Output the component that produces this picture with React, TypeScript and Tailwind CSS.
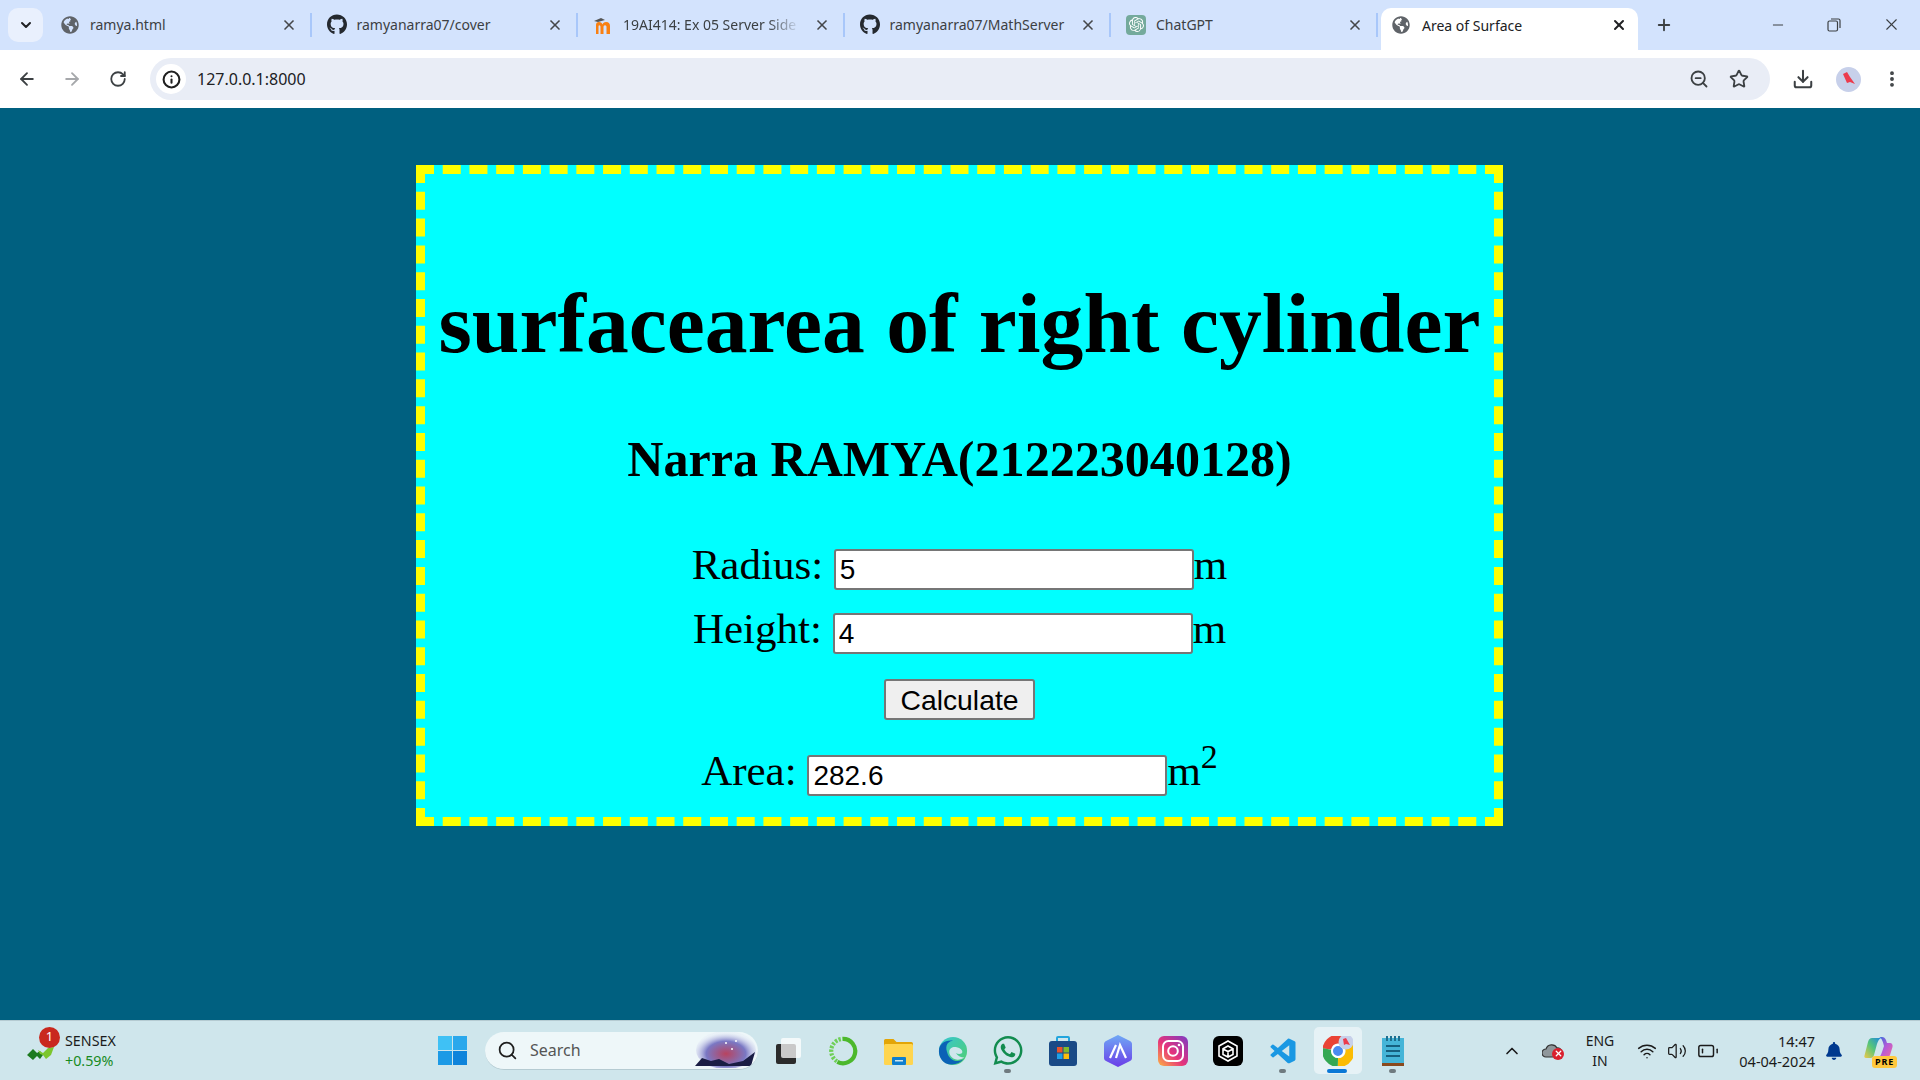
import { ArrowLeft, ArrowRight, BatteryLow, ChevronDown, ChevronUp, Download, EllipsisVertical, Info, Minus, Plus, RotateCw, Search, Star, Volume2, Wifi, X, ZoomOut } from "lucide-react";
import { FaGithub, FaGlobeAmericas, FaWhatsapp, FaBell } from "react-icons/fa";
import { SiOpenai } from "react-icons/si";
import { BiLogoVisualStudio } from "react-icons/bi";
import type { ReactNode } from "react";

const ui = "font-['Noto_Sans',sans-serif]";

function Moodle() {
  return (
    <svg width="20" height="20" viewBox="0 0 20 20">
      <path d="M3 19V10c0-2 1-3 3-3s3 1 3.500 2.500C10 8 11 7 13 7c3 0 4 2 4 4v8h-3.500v-7c0-1-.5-1.700-1.500-1.700s-1.500.7-1.500 1.700v7H7.500v-7c0-1-.5-1.700-1.200-1.700S5.500 11 5.500 12v7z" fill="#f98012" />
      <path d="M1 6l7-3 4 2-7 2z" fill="#555" />
    </svg>
  );
}

function Tab({ icon, title, fade }: { icon: ReactNode; title: string; fade?: boolean }) {
  return (
    <div className="flex h-[50px] w-[266.500px] shrink-0 items-center pl-[15px] pb-[1px]">
      <span className="flex w-[20px] shrink-0 justify-center">{icon}</span>
      <span className={`ml-[10px] flex-1 overflow-hidden whitespace-nowrap text-[14px] text-[#3c4043] ${fade ? "[mask-image:linear-gradient(90deg,#000_80%,transparent_98%)]" : ""}`}>
        {title}
      </span>
      <X size={16} strokeWidth={2.5} className="ml-[10px] shrink-0 text-[#45474a]" />
      <span className="ml-[13px] h-[24px] w-[2px] shrink-0 bg-[#a8c7fa]" />
    </div>
  );
}

function ChatGptIcon() {
  return (
    <span className="flex h-[20px] w-[20px] items-center justify-center rounded-[4px] bg-[#74aa9c]">
      <SiOpenai size={15} className="text-white" />
    </span>
  );
}

function ChromeBar() {
  return (
    <>
      <div className={`flex h-[50px] items-start bg-[#d3e3fd] ${ui}`}>
        <div className="mt-[8px] ml-[8px] mr-[2px] flex h-[34px] w-[35px] items-center justify-center rounded-[10px] bg-[#e9f0fd]">
          <ChevronDown size={16} strokeWidth={3} className="text-[#202124]" />
        </div>
        <Tab icon={<FaGlobeAmericas size={18} className="text-[#5f6368]" />} title="ramya.html" />
        <Tab icon={<FaGithub size={21} className="text-[#24292f]" />} title="ramyanarra07/cover" />
        <Tab icon={<Moodle />} title="19AI414: Ex 05 Server Side Processing" fade />
        <Tab icon={<FaGithub size={21} className="text-[#24292f]" />} title="ramyanarra07/MathServer" />
        <Tab icon={<ChatGptIcon />} title="ChatGPT" />
        <div className="relative mt-[8px] ml-[3.500px] flex h-[42px] w-[257px] shrink-0 items-center rounded-t-[10px] bg-white pr-[11px] pb-[8px] pl-[11px]">
          <FaGlobeAmericas size={18} className="text-[#5f6368]" />
          <span className="ml-[12px] flex-1 text-[14px] text-[#202124]">Area of Surface</span>
          <X size={16} strokeWidth={3} className="text-[#202124]" />
        </div>
        <div className="mt-[16px] ml-[15px] flex w-[22px] justify-center">
          <Plus size={18} strokeWidth={2.5} className="text-[#3c4043]" />
        </div>
        <div className="mt-[15px] ml-[95px] flex items-center text-[#3c4043]">
          <Minus size={16} strokeWidth={1.5} />
          <svg className="ml-[41px]" width="14" height="14" viewBox="0 0 14 14" fill="none" stroke="#3c4043" strokeWidth="1.200">
            <rect x="1" y="3" width="9.500" height="10" rx="1.500" />
            <path d="M4 1h7.500a1.500 1.500 0 0 1 1.500 1.500V10" />
          </svg>
          <X size={19} strokeWidth={1.4} className="ml-[41px]" />
        </div>
      </div>
      <div className={`flex h-[58px] items-center rounded-t-[10px] bg-white ${ui}`}>
        <ArrowLeft size={20} strokeWidth={2.2} className="ml-[17px] text-[#3c4043]" />
        <ArrowRight size={20} strokeWidth={2.2} className="ml-[25px] text-[#a6a8ab]" />
        <RotateCw size={18} strokeWidth={2.4} className="ml-[27px] text-[#3c4043]" />
        <div className="ml-[23px] flex h-[42px] w-[1620px] shrink-0 items-center rounded-full bg-[#e9edf6] pr-[21px] pl-[6px]">
          <span className="flex h-[30px] w-[30px] items-center justify-center rounded-full bg-white">
            <Info size={19} strokeWidth={2.6} className="text-[#1f1f1f]" />
          </span>
          <span className="ml-[11px] flex-1 text-[16px] text-[#202124]">127.0.0.1:8000</span>
          <ZoomOut size={20} strokeWidth={2.2} className="text-[#3c4043]" />
          <Star size={20} strokeWidth={2.2} className="ml-[20px] text-[#3c4043]" />
        </div>
        <Download size={22} strokeWidth={2.2} className="ml-[22px] text-[#3c4043]" />
        <span className="ml-[22px] flex h-[25px] w-[25px] items-center justify-center rounded-full bg-[#c7d0ea]">
          <svg width="14" height="16" viewBox="0 0 14 16"><path d="M1 3l4-2 3 5 5 7-5-2-3 1z" fill="#ec3b4d" /></svg>
        </span>
        <EllipsisVertical size={20} strokeWidth={2.6} className="ml-[21px] text-[#3c4043]" />
      </div>
    </>
  );
}

function TaskIcon({ children, dot, active }: { children: ReactNode; dot?: boolean; active?: boolean }) {
  return (
    <div className="relative flex h-[47px] w-[55px] shrink-0 items-center justify-center">
      {active ? <span className="absolute inset-y-0 left-[4px] right-[3px] rounded-[5px] bg-[#e6f2f6]" /> : null}
      <span className="relative flex h-[30px] w-[30px] items-center justify-center">{children}</span>
      {dot ? <span className="absolute bottom-[1px] left-[24px] h-[4px] w-[7px] rounded-full bg-[#6f7b80]" /> : null}
      {active ? <span className="absolute bottom-[1px] left-[17px] h-[4px] w-[20px] rounded-full bg-[#0a78d6]" /> : null}
    </div>
  );
}

function Taskbar() {
  return (
    <div className={`flex h-[60px] items-center border-t border-[#b5cbd2] bg-[#cfe6ec] ${ui}`}>
      <div className="relative ml-[26px] flex w-[399px] shrink-0 items-center">
        <svg width="30" height="20" viewBox="0 0 30 20" className="mt-[2px]">
          <path d="M1 13l6-6 4 4 3-2 3 4-3 4-3-3-4 4z" fill="#1c7a1f" />
          <path d="M12 8l5 3 5-5 6-1-3 8-5 4-3-4-3-1z" fill="#7cc62d" />
        </svg>
        <span className="absolute left-[13px] top-[-4px] flex h-[21px] w-[21px] items-center justify-center rounded-full bg-[#c9281e] text-[13px] text-white">1</span>
        <div className="ml-[9px] text-[14.300px] leading-[20px]">
          <div className="text-[#1b1b1b]">SENSEX</div>
          <div className="text-[#178a1e]">+0.59%</div>
        </div>
      </div>
      <div className="grid h-[47px] w-[55px] shrink-0 place-items-center">
        <div className="grid grid-cols-2 gap-[1px]">
          <span className="h-[14px] w-[14px] bg-[#3fc1f5]" />
          <span className="h-[14px] w-[14px] bg-[#2aa8ec]" />
          <span className="h-[14px] w-[14px] bg-[#1c9ae6]" />
          <span className="h-[14px] w-[14px] bg-[#0f84db]" />
        </div>
      </div>
      <div className="mr-[2px] ml-[5px] flex h-[38px] w-[273px] shrink-0 items-center overflow-hidden rounded-full border-b border-[#b5cbd2] bg-[#eef7f9] pl-[12px]">
        <Search size={21} strokeWidth={2} className="text-[#1f1f1f]" />
        <span className="ml-[12px] flex-1 text-[16px] text-[#555]">Search</span>
        <svg width="66" height="36" viewBox="0 0 66 36">
          <defs>
            <radialGradient id="neb" cx="50%" cy="60%" r="55%">
              <stop offset="0%" stopColor="#b8435f" />
              <stop offset="60%" stopColor="#7a78c4" />
              <stop offset="100%" stopColor="#d9dcf2" stopOpacity="0.2" />
            </radialGradient>
          </defs>
          <ellipse cx="34" cy="18" rx="30" ry="19" fill="url(#neb)" />
          <path d="M3 34l7-8 9 3 8-2 10 5 14-3 12-9-4 14z" fill="#1a1d44" />
          <circle cx="34" cy="11" r="1" fill="#fff" /><circle cx="40" cy="17" r="1" fill="#fff" /><circle cx="44" cy="9" r="1" fill="#fff" />
        </svg>
      </div>
      <TaskIcon>
        <span className="absolute bottom-[2px] left-[3px] h-[20px] w-[20px] rounded-[2px] bg-[#2b2b2b]" />
        <span className="absolute top-[2px] right-[2px] h-[20px] w-[20px] rounded-[2px] bg-white/75" />
      </TaskIcon>
      <TaskIcon>
        <svg width="32" height="32" viewBox="0 0 32 32" fill="none">
          <path d="M16 3a13 13 0 1 1-6 24.500" stroke="#4cb82c" strokeWidth="4.500" />
          <path d="M9.500 27A13 13 0 0 1 16 3" stroke="#6fcf57" strokeWidth="4.500" strokeDasharray="2.500 1.500" />
        </svg>
      </TaskIcon>
      <TaskIcon>
        <svg width="30" height="30" viewBox="0 0 30 30">
          <path d="M1 4.500a1.500 1.500 0 0 1 1.500-1.500h8l3 3h14A2 2 0 0 1 30 8v4H1z" fill="#e3a507" />
          <rect x="1" y="8" width="29" height="21" rx="1.500" fill="#ffd54f" />
          <rect x="9" y="21" width="14" height="8" rx="1" fill="#0f7fcf" />
          <rect x="12" y="24" width="8" height="1.500" fill="#cfe6ec" />
        </svg>
      </TaskIcon>
      <TaskIcon>
        <svg width="32" height="32" viewBox="0 0 32 32">
          <defs>
            <linearGradient id="edge" x1="0" y1="0" x2="1" y2="1">
              <stop offset="0%" stopColor="#36c6d3" />
              <stop offset="100%" stopColor="#52cf6e" />
            </linearGradient>
          </defs>
          <circle cx="16" cy="16" r="15" fill="url(#edge)" />
          <path d="M1 16C1 8 8 4 16 5c-8 1-8 8-6 13 2 7 10 12 18 6-5 6-13 8-20 5C3 26 1 21 1 16z" fill="#0b62b6" />
          <path d="M12 17c0-4 4-6 8-5 4 1 6 3 6 5s-4 3-7 1c2 3 6 5 9 5-4 3-10 3-13 0-2-2-3-4-3-6z" fill="#cfe6ec" />
        </svg>
      </TaskIcon>
      <TaskIcon dot>
        <FaWhatsapp size={33} className="text-[#128c4f]" />
      </TaskIcon>
      <TaskIcon>
        <svg width="30" height="32" viewBox="0 0 30 32">
          <path d="M9 7V3a1 1 0 0 1 1-1h10a1 1 0 0 1 1 1v4" fill="none" stroke="#22a5dd" strokeWidth="2" />
          <rect x="1" y="6" width="28" height="25" rx="3" fill="#1a4a86" />
          <rect x="9" y="12" width="5.500" height="5.500" fill="#e8532b" />
          <rect x="15.500" y="12" width="5.500" height="5.500" fill="#7fba2c" />
          <rect x="9" y="18.500" width="5.500" height="5.500" fill="#1da1e8" />
          <rect x="15.500" y="18.500" width="5.500" height="5.500" fill="#fbbd0c" />
        </svg>
      </TaskIcon>
      <TaskIcon>
        <svg width="30" height="34" viewBox="0 0 30 34">
          <defs>
            <linearGradient id="hex" x1="0" y1="0" x2="0" y2="1">
              <stop offset="0%" stopColor="#6fa8f5" />
              <stop offset="100%" stopColor="#6a3de8" />
            </linearGradient>
          </defs>
          <path d="M15 1l12 6c1 .5 2 1.500 2 3v14c0 1.500-1 2.500-2 3l-12 6-12-6c-1-.5-2-1.500-2-3V10c0-1.500 1-2.500 2-3z" fill="url(#hex)" />
          <path d="M7 24l6-13M13 24l4-13 6 13" fill="none" stroke="#fff" strokeWidth="2.200" />
        </svg>
      </TaskIcon>
      <TaskIcon>
        <svg width="30" height="30" viewBox="0 0 30 30">
          <defs>
            <linearGradient id="insta" x1="0" y1="1" x2="1" y2="0">
              <stop offset="0%" stopColor="#fdb244" />
              <stop offset="45%" stopColor="#e5337b" />
              <stop offset="100%" stopColor="#7d3bc4" />
            </linearGradient>
          </defs>
          <rect width="30" height="30" rx="6" fill="url(#insta)" />
          <rect x="5" y="5" width="20" height="20" rx="5.500" fill="none" stroke="#fff" strokeWidth="2" />
          <circle cx="15" cy="15" r="4.800" fill="none" stroke="#fff" strokeWidth="2" />
          <circle cx="21" cy="9" r="1.300" fill="#fff" />
        </svg>
      </TaskIcon>
      <TaskIcon>
        <svg width="30" height="30" viewBox="0 0 30 30">
          <rect width="30" height="30" rx="6" fill="#000" />
          <path d="M15 5l9 5v10l-9 5-9-5V10z M15 10l5 2.800v5.600L15 21l-5-2.600v-5.600z M10 13l5 2.500 5-2.500M15 15.500V21" fill="none" stroke="#fff" strokeWidth="1.600" />
        </svg>
      </TaskIcon>
      <TaskIcon dot>
        <BiLogoVisualStudio size={36} className="text-[#1a98e3]" />
      </TaskIcon>
      <TaskIcon active>
        <svg width="30" height="30" viewBox="0 0 30 30" fill="none" strokeWidth="9">
          <path d="M3.900 13a11.500 11.500 0 0 1 22-3" stroke="#ea4335" />
          <path d="M25.900 10a11.500 11.500 0 0 1-11 16.500" stroke="#fbbc04" />
          <path d="M14.900 26.500A11.500 11.500 0 0 1 3.900 13" stroke="#34a853" />
          <circle cx="15" cy="15" r="6" fill="#4a8bf0" stroke="#fff" strokeWidth="2" />
          <circle cx="23" cy="6" r="7.500" fill="#c7d0ea" stroke="none" />
          <path d="M20 3l3-1 4 7-4-1-2 1z" fill="#ec3b4d" stroke="none" />
        </svg>
      </TaskIcon>
      <TaskIcon dot>
        <svg width="24" height="32" viewBox="0 0 24 32">
          <rect x="1" y="3" width="22" height="26" fill="#45b5d8" />
          <rect x="1" y="28" width="22" height="3" fill="#8a4a1e" />
          <rect x="5" y="1" width="2" height="5" fill="#1d6f8f" /><rect x="9" y="1" width="2" height="5" fill="#1d6f8f" /><rect x="13" y="1" width="2" height="5" fill="#1d6f8f" /><rect x="17" y="1" width="2" height="5" fill="#1d6f8f" />
          <rect x="5" y="10" width="14" height="2" fill="#16607f" /><rect x="5" y="15" width="14" height="2" fill="#16607f" /><rect x="5" y="20" width="14" height="2" fill="#16607f" />
        </svg>
      </TaskIcon>
      <ChevronUp size={20} strokeWidth={2} className="ml-[82px] shrink-0 text-[#1b1b1b]" />
      <div className="relative ml-[20px] h-[20px] w-[20px] shrink-0">
        <svg width="20" height="16" viewBox="0 0 20 16" className="mt-[1px]"><path d="M4 15a4 4 0 0 1 0-8 6 6 0 0 1 11-1 4 4 0 0 1 1 9z" fill="#8f979b" stroke="#333" strokeWidth="1.200" /></svg>
        <span className="absolute left-[10px] top-[7px] flex h-[12px] w-[12px] items-center justify-center rounded-full bg-[#d9202e]">
          <X size={9} strokeWidth={3.5} className="text-white" />
        </span>
      </div>
      <div className="ml-[20px] w-[36px] shrink-0 text-center text-[14px] leading-[20px] text-[#1b1b1b]">
        <div>ENG</div>
        <div>IN</div>
      </div>
      <Wifi size={20} strokeWidth={1.8} className="ml-[19px] shrink-0 text-[#1b1b1b]" />
      <Volume2 size={20} strokeWidth={1.5} className="ml-[10px] shrink-0 text-[#1b1b1b]" />
      <BatteryLow size={22} strokeWidth={1.6} className="ml-[10px] shrink-0 text-[#1b1b1b]" />
      <div className="ml-[16px] w-[80px] shrink-0 text-right text-[14.500px] leading-[20px] whitespace-nowrap text-[#1b1b1b]">
        <div>14:47</div>
        <div>04-04-2024</div>
      </div>
      <FaBell size={18} className="ml-[10px] shrink-0 text-[#00398f]" />
      <div className="relative ml-[21px] h-[30px] w-[30px] shrink-0">
        <svg width="30" height="24" viewBox="0 0 30 24">
          <defs>
            <linearGradient id="cop1" x1="0" y1="1" x2="1" y2="0">
              <stop offset="0%" stopColor="#f0c94a" />
              <stop offset="50%" stopColor="#55c57a" />
              <stop offset="100%" stopColor="#1e88e0" />
            </linearGradient>
            <linearGradient id="cop2" x1="0" y1="0" x2="1" y2="1">
              <stop offset="0%" stopColor="#2a6fdc" />
              <stop offset="50%" stopColor="#b45ad8" />
              <stop offset="100%" stopColor="#f06aa0" />
            </linearGradient>
          </defs>
          <path d="M8 2h9c-2 1-3 3-4 6l-3 11c-.5 2-1.500 3-3.500 3H2c-1.500 0-2-1-1.500-2.500L4 6c1-3 2-4 4-4z" fill="url(#cop1)" />
          <path d="M15 1h3c2 0 3 1 4 3l1 3h3c2 0 3 2 2.500 4L26 19c-1 2-2 3-4 3H14c2-1 3-3 4-6l2-6c-1-4-2-8-5-9z" fill="url(#cop2)" />
        </svg>
        <span className="absolute bottom-[-2px] right-[-3px] rounded-[3px] bg-[#ffc83d] px-[3px] text-[9px] leading-[12px] font-bold tracking-[0.8px] text-black">PRE</span>
      </div>
    </div>
  );
}

const fieldClass = "h-[41px] w-[360px] rounded-[3px] border-2 border-[#767676] bg-white px-[4px] align-baseline font-['Liberation_Sans',sans-serif] text-[28px] text-black";

export default function App() {
  return (
    <div className="flex h-[1080px] flex-col overflow-hidden">
      <ChromeBar />
      <main className="flex-1 bg-[#006080] pt-[57px] font-['Liberation_Serif',serif] text-black">
        <div className="ml-[416px] h-[661px] w-[1087px] border-[9px] border-dashed border-[#ffff00] bg-[#00ffff] text-center">
          <h1 className="mt-[101px] text-[85.600px] leading-[98px] font-bold">surfacearea of right cylinder</h1>
          <h2 className="mt-[58px] text-[50.100px] leading-[57px] font-bold">Narra RAMYA(212223040128)</h2>
          <form className="mt-[53px] text-[43px]">
            <div className="h-[64px] leading-[47px]">
              Radius: <input className={fieldClass} defaultValue="5" />m
            </div>
            <div className="h-[74px] leading-[47px]">
              Height: <input className={fieldClass} defaultValue="4" />m
            </div>
            <button type="button" className="mx-auto block h-[41px] w-[151px] rounded-[3px] border-2 border-[#767676] bg-[#efefef] font-['Liberation_Sans',sans-serif] text-[28.300px] leading-[32px]">
              Calculate
            </button>
            <div className="mt-[27px] leading-[47px]">
              Area: <input className={fieldClass} defaultValue="282.6" />m<sup className="text-[34px]">2</sup>
            </div>
          </form>
        </div>
      </main>
      <Taskbar />
    </div>
  );
}
